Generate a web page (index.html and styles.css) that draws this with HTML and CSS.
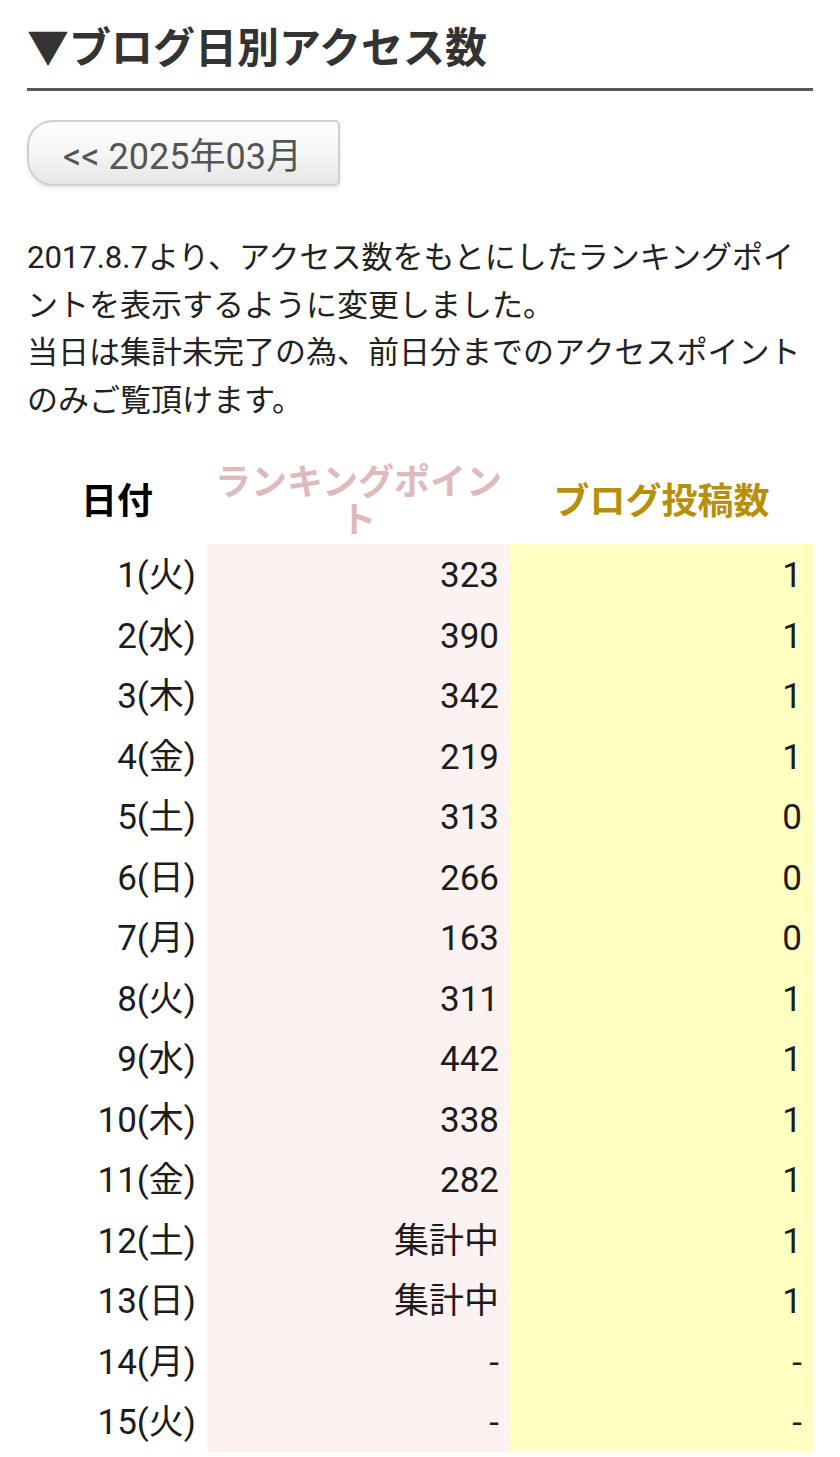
FILE: index.html
```html
<!DOCTYPE html>
<html lang="ja">
<head>
<meta charset="utf-8">
<title>ブログ日別アクセス数</title>
<link rel="stylesheet" href="styles.css">
</head>
<body>
<div class="page">
  <h1 class="title">▼ブログ日別アクセス数</h1>
  <div class="nav">
    <a class="prev-btn" href="#">&lt;&lt; 2025年03月</a>
  </div>
  <p class="note">2017.8.7より、アクセス数をもとにしたランキングポイントを表示するように変更しました。<br>当日は集計未完了の為、前日分までのアクセスポイントのみご覧頂けます。</p>
  <table class="stats">
    <thead>
      <tr>
        <th class="col-date">日付</th>
        <th class="col-rank">ランキングポイント</th>
        <th class="col-post">ブログ投稿数</th>
      </tr>
    </thead>
    <tbody>
      <tr><td class="date">1(火)</td><td class="rank">323</td><td class="post">1</td></tr>
      <tr><td class="date">2(水)</td><td class="rank">390</td><td class="post">1</td></tr>
      <tr><td class="date">3(木)</td><td class="rank">342</td><td class="post">1</td></tr>
      <tr><td class="date">4(金)</td><td class="rank">219</td><td class="post">1</td></tr>
      <tr><td class="date">5(土)</td><td class="rank">313</td><td class="post">0</td></tr>
      <tr><td class="date">6(日)</td><td class="rank">266</td><td class="post">0</td></tr>
      <tr><td class="date">7(月)</td><td class="rank">163</td><td class="post">0</td></tr>
      <tr><td class="date">8(火)</td><td class="rank">311</td><td class="post">1</td></tr>
      <tr><td class="date">9(水)</td><td class="rank">442</td><td class="post">1</td></tr>
      <tr><td class="date">10(木)</td><td class="rank">338</td><td class="post">1</td></tr>
      <tr><td class="date">11(金)</td><td class="rank">282</td><td class="post">1</td></tr>
      <tr><td class="date">12(土)</td><td class="rank">集計中</td><td class="post">1</td></tr>
      <tr><td class="date">13(日)</td><td class="rank">集計中</td><td class="post">1</td></tr>
      <tr><td class="date">14(月)</td><td class="rank">-</td><td class="post">-</td></tr>
      <tr><td class="date">15(火)</td><td class="rank">-</td><td class="post">-</td></tr>
    </tbody>
  </table>
</div>
</body>
</html>
```

FILE: styles.css
```css
html, body {
  margin: 0;
  padding: 0;
  background: #ffffff;
}

body {
  font-family: Roboto, "Noto Sans CJK JP", sans-serif;
  color: #222222;
}

.page {
  padding: 0 27px;
}

.title {
  margin: 0;
  padding: 16px 0 15px;
  font-family: "Noto Sans CJK JP", sans-serif;
  font-size: 42px;
  line-height: 57px;
  font-weight: 700;
  color: #333333;
  border-bottom: 3px solid #595959;
}

.nav {
  padding-top: 29px;
  display: flex;
}

.prev-btn {
  box-sizing: border-box;
  display: flex;
  align-items: center;
  width: 313px;
  height: 66px;
  padding-left: 34px;
  font-size: 36px;
  color: #555555;
  text-decoration: none;
  background: linear-gradient(#ffffff 0%, #f7f7f7 45%, #e6e6e6 100%);
  border: 2px solid #cfcfcf;
  border-radius: 26px 5px 5px 26px;
  box-shadow: 0 3px 4px rgba(0, 0, 0, 0.08);
}

.note {
  margin: 48px 0 0;
  font-size: 31px;
  line-height: 47.5px;
  color: #222222;
}

.stats {
  margin-top: 36px;
  width: 786px;
  border-collapse: collapse;
  border-spacing: 0;
  table-layout: fixed;
}

.stats th {
  padding: 0 0 8px;
  font-family: "Noto Sans CJK JP", sans-serif;
  font-size: 36px;
  line-height: 38px;
  font-weight: 700;
  text-align: center;
  vertical-align: middle;
}

.col-date {
  width: 180px;
  color: #000000;
}

.col-rank {
  width: 303px;
  color: #dfbabd;
}

.col-post {
  width: 303px;
  color: #b88f0b;
}

.stats td {
  padding: 7px 11px 3px 0;
  font-size: 35px;
  line-height: 50.5px;
  text-align: right;
  color: #1c1c1c;
}

.stats td.rank {
  background: #fcf2f2;
}

.stats td.post {
  background: #ffffc2;
}
```
